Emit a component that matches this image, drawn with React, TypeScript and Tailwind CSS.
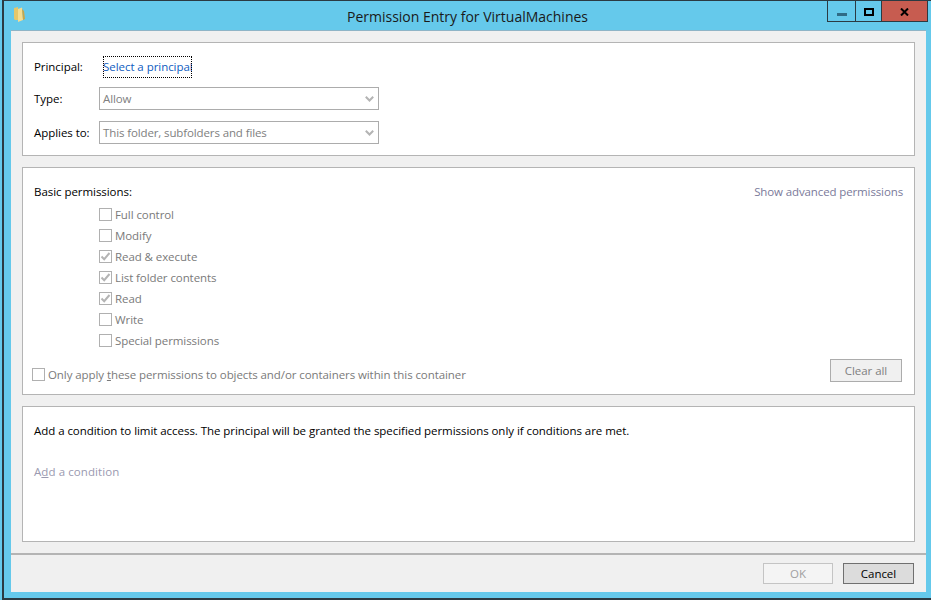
import React from 'react';

const font = "font-['Open_Sans','Noto_Sans',sans-serif]";

function Chevron() {
  return (
    <svg width="9" height="6" viewBox="0 0 9 6" className="mr-[4px]">
      <path d="M0.8 0.8 L4.5 4.5 L8.2 0.8" fill="none" stroke="#b4b4b4" strokeWidth="2" />
    </svg>
  );
}

function Select({ value }: { value: string }) {
  return (
    <div className="w-[280px] h-[23px] border border-[#acacac] flex items-center justify-between pl-[3px] text-[#808080] tracking-[-0.12px]">
      <span>{value}</span>
      <Chevron />
    </div>
  );
}

function Check({ checked, label }: { checked?: boolean; label: React.ReactNode }) {
  return (
    <div className="flex items-center h-[21px]">
      <div className="w-[13px] h-[13px] border border-[#b0b0b0] bg-white flex items-center justify-center mr-[3px] shrink-0">
        {checked && (
          <svg width="11" height="11" viewBox="0 0 11 11">
            <path d="M1.5 5.5 L4.2 8.2 L9.5 2" fill="none" stroke="#b4b4b4" strokeWidth="2" />
          </svg>
        )}
      </div>
      <span className="text-[#7a7a7a] whitespace-nowrap tracking-[-0.08px]">{label}</span>
    </div>
  );
}

export default function App() {
  return (
    <div className={`w-[931px] h-[600px] overflow-hidden bg-[#65c9eb] flex flex-col pl-[2px] ${font} text-[11.5px] tracking-[-0.05px] leading-[18px] text-black`}>
      <div className="flex-1 flex flex-col border-l-2 border-t border-b-2 border-[#2b3a42] min-h-0">
        {/* Title bar */}
        <div className="h-[29px] flex relative shrink-0">
          <svg width="12" height="15" viewBox="0 0 12 15" className="absolute left-[10px] top-[6px]">
            <path d="M0 1 L4 0 L4 13 L1 13 L0 12 Z" fill="#e6c76a" />
            <path d="M4 2 L8 0.5 L9 13 L4 15 Z" fill="#f6dd90" />
            <path d="M8 2 L10 4 L11 12 L9 13 Z" fill="#c9a648" />
          </svg>
          <div className="flex-1 text-center text-[14px] tracking-normal leading-[31px] text-[#1a1a1a]">Permission Entry for VirtualMachines</div>
          <div className="absolute top-0 right-[3px] h-[21px] flex border-x border-b border-[#2b3a42]">
            <div className="w-[28px] flex items-center justify-center border-r border-[#2b3a42]">
              <div className="w-[10px] h-[3px] bg-[#2f6b86] mt-[6px]" />
            </div>
            <div className="w-[26px] flex items-center justify-center border-r border-[#2b3a42]">
              <div className="w-[10px] h-[8px] border-2 border-black mt-[1px]" />
            </div>
            <div className="w-[45px] flex items-center justify-center bg-[#c75c50]">
              <svg width="9" height="8" viewBox="0 0 9 8" className="mt-[1px]">
                <path d="M1 0.5 L8 7.5 M8 0.5 L1 7.5" stroke="#000" strokeWidth="2" />
              </svg>
            </div>
          </div>
        </div>
        {/* Body */}
        <div className="flex-1 ml-[7px] mr-[5px] bg-[#f0f0f0] mb-[6px] flex flex-col min-h-0 border-t border-[#8fb4c6]">
          <div className="flex-1 flex flex-col gap-[11px] px-[11px] pt-[11px]">
            <div className="h-[114px] bg-white border border-[#b4b4b4] pl-[11px] pt-[12px]">
              <div className="flex items-center h-[24px]">
                <span className="w-[69px]">Principal:</span>
                <span className="text-[#0f5cc0] outline-1 outline-dotted outline-black -outline-offset-1 h-[22px] leading-[22px] w-[89px] overflow-hidden whitespace-nowrap">Select a principal</span>
              </div>
              <div className="flex items-center h-[23px] mt-[8px]">
                <span className="w-[65px]">Type:</span>
                <Select value="Allow" />
              </div>
              <div className="flex items-center h-[23px] mt-[11px]">
                <span className="w-[65px]">Applies to:</span>
                <Select value="This folder, subfolders and files" />
              </div>
            </div>
            <div className="h-[228px] bg-white border border-[#b4b4b4] px-[11px] pt-[15px] flex flex-col">
              <div className="flex justify-between h-[18px]">
                <span>Basic permissions:</span>
                <span className="text-[#7a7a9a] tracking-[-0.12px]">Show advanced permissions</span>
              </div>
              <div className="pl-[65px] mt-[3px]">
                <Check label="Full control" />
                <Check label="Modify" />
                <Check checked label="Read & execute" />
                <Check checked label="List folder contents" />
                <Check checked label="Read" />
                <Check label="Write" />
                <Check label="Special permissions" />
              </div>
              <div className="flex items-start justify-between -ml-[2px] mt-[8px]">
                <div className="mt-[5px]">
                  <Check label={<>Only apply <u>t</u>hese permissions to objects and/or containers within this container</>} />
                </div>
                <div className="w-[72px] h-[23px] border border-[#acacac] bg-[#f0f0f0] text-[#808080] text-center leading-[22px] mr-[1px]">Clear all</div>
              </div>
            </div>
            <div className="h-[136px] bg-white border border-[#b4b4b4] pl-[11px] pt-[15px]">
              <div>Add a condition to limit access. The principal will be granted the specified permissions only if conditions are met.</div>
              <div className="mt-[23px] text-[#9a9ab0] tracking-[0.08px]">A<u>d</u>d a condition</div>
            </div>
          </div>
          <div className="h-[39px] mt-[11px] border-t-2 border-[#b4b4b4] flex justify-end items-start pt-[8px] pr-[12px] gap-[10px] shrink-0">
            <div className="w-[70px] h-[21px] border border-[#c4c4c4] bg-[#f4f4f4] text-[#a0a0a0] text-center leading-[20px]">OK</div>
            <div className="w-[71px] h-[21px] border border-[#707070] bg-[#dcdcdc] text-center leading-[20px]">Cancel</div>
          </div>
        </div>
      </div>
    </div>
  );
}
